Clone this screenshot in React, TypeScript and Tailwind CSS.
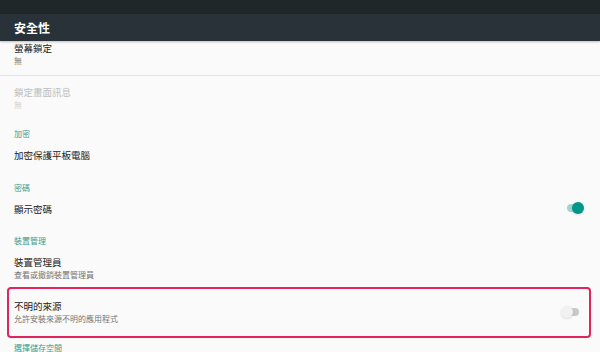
import type React from "react"

function Toggle({ on }: { on: boolean }) {
  return (
    <div className="relative w-[18px] h-[12px] shrink-0">
      <div
        className={
          on
            ? "absolute left-[1px] right-[2px] top-[2px] h-[8px] rounded-full bg-[#9fd6d0]"
            : "absolute left-[2px] right-0 top-[2px] h-[8px] rounded-full bg-[#c9c9c9]"
        }
      />
      <div
        className={
          on
            ? "absolute right-0 top-0 w-[12px] h-[12px] rounded-full bg-[#009688] shadow-sm"
            : "absolute left-0 top-0 w-[12px] h-[12px] rounded-full bg-[#f1f1f1] shadow-sm"
        }
      />
    </div>
  )
}

function Header({ children, className = "" }: { children: React.ReactNode; className?: string }) {
  return <div className={"pl-[14px] h-[20px] text-[8px] leading-[12px] text-[#3a9a8d] " + className}>{children}</div>
}

export default function App() {
  return (
    <div
      className="w-[600px] h-[352px] overflow-hidden bg-[#fafafa] text-[#212121]"
      style={{ fontFamily: '"Noto Sans CJK TC", "Noto Sans", sans-serif' }}
    >
      <div className="h-[14px] bg-[#1f2729]" />
      <div className="relative z-10 h-[27px] bg-[#283238] flex items-center px-[14px] text-white text-[12px] font-bold shadow-[0_1px_2px_rgba(0,0,0,0.25)]">
        安全性
      </div>

      <div className="pl-[14px] h-[35px] border-b border-[#e4e4e4]">
        <div className="text-[9.5px] leading-[14px]">螢幕鎖定</div>
        <div className="text-[8px] leading-[12px] text-[#757575]">無</div>
      </div>

      <div className="pl-[14px] pt-[9px] h-[52px]">
        <div className="text-[9.5px] leading-[14px] text-[#bdbdbd]">鎖定畫面訊息</div>
        <div className="text-[8px] leading-[12px] text-[#cfcfcf]">無</div>
      </div>

      <Header>加密</Header>
      <div className="pl-[14px] h-[34px] text-[9.5px] leading-[14px]">加密保護平板電腦</div>

      <Header>密碼</Header>
      <div className="pl-[14px] pr-[16px] h-[33px] flex items-start justify-between">
        <div className="text-[9.5px] leading-[14px]">顯示密碼</div>
        <Toggle on />
      </div>

      <Header>裝置管理</Header>
      <div className="pl-[14px] h-[32px]">
        <div className="text-[9.5px] leading-[14px]">裝置管理員</div>
        <div className="text-[8px] leading-[12px] text-[#757575]">查看或撤銷裝置管理員</div>
      </div>

      <div className="ml-[7px] w-[584px] h-[51px] border-2 border-[#e0245e] rounded-[4px] pl-[5px] pr-[10px] pt-[10px] flex justify-between">
        <div>
          <div className="text-[9.5px] leading-[14px]">不明的來源</div>
          <div className="text-[8px] leading-[12px] text-[#757575]">允許安裝來源不明的應用程式</div>
        </div>
        <div className="pt-[7px]">
          <Toggle on={false} />
        </div>
      </div>

      <Header className="mt-[4px]">選擇儲存空間</Header>
    </div>
  )
}
